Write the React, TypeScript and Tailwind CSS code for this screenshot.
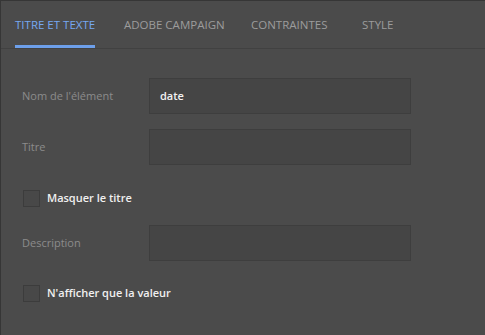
import React from "react";

const tabs = [
  { label: "TITRE ET TEXTE", w: "w-[109px]" },
  { label: "ADOBE CAMPAIGN", w: "w-[127px]" },
  { label: "CONTRAINTES", w: "w-[111px]" },
  { label: "STYLE", w: "w-[60px]" },
];

const Field: React.FC<{ label: string; value?: string; className?: string }> = ({ label, value, className }) => (
  <div className={`flex items-center ${className ?? ""}`}>
    <div className="w-[127px] text-[11px] text-[#8c8c8c]">{label}</div>
    <div className="flex h-[36px] w-[262px] items-center border border-[#3e3e3e] bg-[#454545] px-[10px] text-[11px] font-semibold text-[#f2f2f2]">
      {value}
    </div>
  </div>
);

const Check: React.FC<{ label: string; className?: string }> = ({ label, className }) => (
  <div className={`flex items-center ${className ?? ""}`}>
    <div className="ml-px h-[17px] w-[17px] border border-[#3c3c3c] bg-[#484848]" />
    <span className="ml-[7px] text-[11px] font-semibold text-[#f0f0f0]">{label}</span>
  </div>
);

export default function App() {
  return (
    <div
      className="h-[335px] w-[485px] overflow-hidden border-l border-t border-[#363636] bg-[#4b4b4b]"
      style={{ fontFamily: '"Open Sans", "Noto Sans", sans-serif' }}
    >
      {/* tabs */}
      <div className="flex h-[48px] border-b border-[#414141] pl-[14px]">
        {tabs.map((t, i) => (
          <div key={t.label} className={`flex h-full ${t.w}`}>
            <span
              className={`flex h-full items-center border-b-[3px] pt-[4px] text-[11.5px] ${
                i === 0 ? "border-[#6d9fea] text-[#76a8f2]" : "border-transparent text-[#9c9c9c]"
              }`}
            >
              {t.label}
            </span>
          </div>
        ))}
      </div>

      {/* form */}
      <div className="flex flex-col pl-[21px]">
        <Field label="Nom de l'élément" value="date" className="mt-[29px]" />
        <Field label="Titre" className="mt-[15px]" />
        <Check label="Masquer le titre" className="mt-[25px]" />
        <Field label="Description" className="mt-[18px]" />
        <Check label="N'afficher que la valeur" className="mt-[24px]" />
      </div>
    </div>
  );
}
